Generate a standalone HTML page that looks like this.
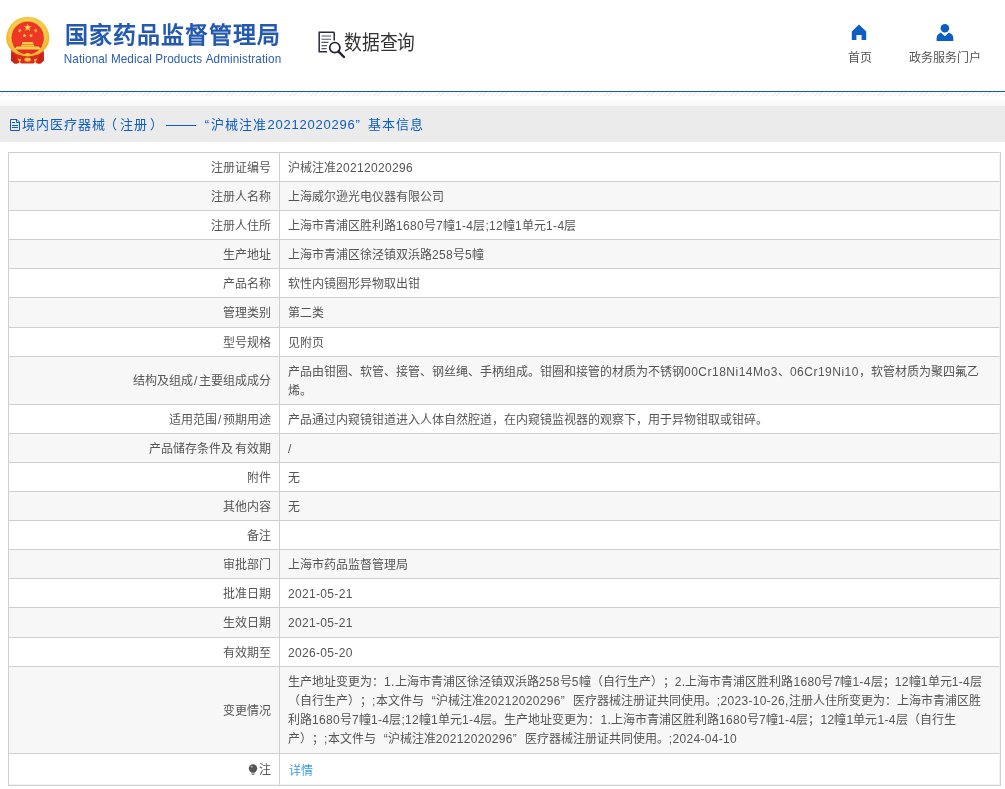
<!DOCTYPE html>
<html lang="zh-CN">
<head>
<meta charset="utf-8">
<title>境内医疗器械（注册）</title>
<style>
*{box-sizing:border-box;margin:0;padding:0}
html,body{width:1005px;height:789px;overflow:hidden;background:#fff}
body{font-family:"Liberation Sans",sans-serif;font-size:12px;color:#555;position:relative;text-spacing-trim:space-all;font-kerning:none}
.abs{position:absolute}
#hdr{position:absolute;left:0;top:0;width:1005px;height:91px;will-change:transform}
#emblem{position:absolute;left:0;top:0}
#cn{position:absolute;left:64.6px;top:19.3px;font-size:23px;line-height:32px;font-weight:bold;color:#2359ae;white-space:nowrap;letter-spacing:1px}
#en{position:absolute;left:63.8px;top:51.6px;font-size:11.7px;letter-spacing:.11px;line-height:14px;color:#2a5db0;white-space:nowrap;transform:scaleY(1.09);transform-origin:0 50%}
#sico{position:absolute;left:316.7px;top:30px}
#stxt{position:absolute;left:344.3px;top:28.6px;font-size:20px;line-height:28px;color:#333;white-space:nowrap;transform:scaleX(.888);transform-origin:0 0}
.nav{position:absolute;font-size:12px;line-height:16px;color:#555;white-space:nowrap;text-align:center}
#blue{position:absolute;left:0;top:91px;width:1005px;height:1px;background:#0c5cb6}
#hatch{position:absolute;left:0;top:92px;width:1005px;height:4px;background:repeating-linear-gradient(135deg,#fff 0,#fff 2.05px,#ececec 2.05px,#ececec 2.97px)}
#grad{position:absolute;left:0;top:96px;width:1005px;height:10px;background:linear-gradient(#fff,#fefefe 40%,#f6f6f6)}
#bar{position:absolute;left:0;top:106px;width:1005px;height:36px;background:#ebebeb;will-change:transform}
#bar .t{position:absolute;top:8.5px;font-size:13px;letter-spacing:1px;line-height:20px;color:#0b5cc3;white-space:nowrap}
#docico{position:absolute;left:10px;top:13px}
table{will-change:transform;position:absolute;left:8px;top:152px;width:993px;border-collapse:separate;border-spacing:0;table-layout:fixed;border:1px solid #cfcfcf;border-top:0}
td{border-top:1px solid #cfcfcf;font-size:12px;line-height:19px;color:#555;vertical-align:middle;white-space:nowrap;overflow:hidden}
td.l{width:271px;text-align:right;padding:2px 8.4px 0 0;border-right:1px solid #cfcfcf}
td.v{padding:2px 0 0 8px;border-right:1px solid #f3f3fb}
tr.g td{background:#f7f7f7}
tr:last-child td{border-bottom:1px solid #f3f3fb}
td i{font-style:normal;letter-spacing:.33px}
td i.a{letter-spacing:.5px}
td u{text-decoration:none;display:inline-block;width:6px;text-align:center}
td b{font-weight:normal;display:inline-block;width:12px}
td b.ql{text-align:right}
td b.qr{text-align:left}
a{color:#3a97f3;text-decoration:none}
</style>
</head>
<body>
<div id="hdr">
  <svg id="emblem" width="60" height="80" viewBox="0 0 60 80">
    <defs>
      <radialGradient id="gg" cx="50%" cy="45%" r="55%"><stop offset="0" stop-color="#ffe27a"/><stop offset=".72" stop-color="#f8cb45"/><stop offset="1" stop-color="#efb02c"/></radialGradient>
    </defs>
    <path d="M11.3 46 H43.6 L43.9 60.5 L40.5 63.6 L36.8 63.6 L35.2 62 L33.5 63.6 L21.3 63.6 L19.8 62 L18.3 63.6 L14.6 63.6 L11 60.5 Z" fill="#de2a1d"/>
    <path d="M11.3 52 L11 60.5 L14.6 63.6 L17 63.6 L16 56 Z M43.6 52 L43.9 60.5 L40.5 63.6 L38 63.6 L39 56 Z" fill="#cc2119"/>
    <path d="M6.2 38.3 A21.6 21.6 0 0 1 49.4 38.3 A21.6 18.2 0 0 1 6.2 38.3 Z" fill="url(#gg)"/>
    <circle cx="27.7" cy="37.8" r="16.2" fill="#ee3626"/>
    <path d="M13.2 45.2 A16.2 16.2 0 0 0 42.2 45.2 Z" fill="#e82c20"/>
    <path d="M24.3 54.8 Q27.7 50.5 31.1 54.8 Q27.7 57.5 24.3 54.8Z" fill="#f6c63e"/>
    <path d="M24 59.6 L25.6 57.7 H29.6 L31.2 59.6 L29.6 61.5 H25.6 Z" fill="#f5c338"/>
    <path d="M17.6 58.6 L21.4 59.6 L19.8 62.4 Z M37.4 58.6 L33.6 59.6 L35.2 62.4 Z" fill="#f5c338"/>
    <polygon points="27.7,23.4 28.7,26.2 31.7,26.3 29.3,28.1 30.2,31 27.7,29.3 25.2,31 26.1,28.1 23.7,26.3 26.7,26.2" fill="#f9d04a"/>
    <polygon points="20.9,28.8 20.6,30.2 21.9,31.0 20.4,31.3 20.0,32.7 19.4,31.4 17.9,31.5 18.9,30.4 18.4,29.0 19.7,29.7" fill="#fad648"/><polygon points="34.7,28.8 35.8,29.7 37.1,29.0 36.6,30.4 37.6,31.5 36.1,31.4 35.5,32.7 35.1,31.3 33.6,31.0 34.9,30.2" fill="#fad648"/><polygon points="25.0,33.5 25.2,35.0 26.7,35.3 25.4,36.0 25.5,37.5 24.4,36.5 23.1,37.1 23.7,35.7 22.7,34.6 24.2,34.8" fill="#fad648"/><polygon points="30.6,33.5 31.4,34.8 32.9,34.6 31.9,35.7 32.5,37.1 31.2,36.5 30.1,37.5 30.2,36.0 28.9,35.3 30.4,35.0" fill="#fad648"/>
    <path d="M21.6 44.6 L22.6 42 L32.8 42 L33.8 44.6 Z M20.6 46.3 L21.6 44.9 L33.8 44.9 L34.8 46.3 Z M14.6 49.6 L16.4 46.6 L39 46.6 L40.8 49.6 Z" fill="#f9cf48"/>
  </svg>
  <div id="cn">国家药品监督管理局</div>
  <div id="en">National Medical Products Administration</div>
  <svg id="sico" width="40" height="40" viewBox="0 0 40 40">
    <path d="M17.2 2.2 H2.2 V21.8 H10" fill="none" stroke="#2b2b3d" stroke-width="1.5"/>
    <path d="M17.2 2.2 V10.5" fill="none" stroke="#2b2b3d" stroke-width="1.5"/>
    <path d="M4.5 6 H14 M4.5 9.2 H14 M4.5 12.4 H11.5 M4.5 15.6 H10 M4.5 18.6 H9.5" stroke="#55556a" stroke-width="1.1" fill="none"/>
    <circle cx="17.8" cy="17.6" r="5.1" fill="#fff" stroke="#20202e" stroke-width="1.7"/>
    <path d="M21.6 21.6 L27 27" stroke="#20202e" stroke-width="2.4" stroke-linecap="round"/>
  </svg>
  <div id="stxt">数据查询</div>
  <svg class="abs" style="left:850px;top:23px" width="18" height="18" viewBox="0 0 18 18"><path d="M9 1.6 L1.8 8.4 V17 H6.4 V12 H11.6 V17 H16.2 V8.4 Z" fill="#0b5fc4"/></svg>
  <svg class="abs" style="left:935px;top:22px" width="20" height="20" viewBox="0 0 20 20"><circle cx="9.9" cy="6.2" r="4.3" fill="#0b5fc4"/><path d="M5.8 10.4 L9.9 14.3 L14 10.4 L16.6 12.3 Q18.3 13.6 18.3 16 V19 H1.6 V16 Q1.6 13.6 3.3 12.3 Z" fill="#0b5fc4"/></svg>
  <div class="nav" style="left:836px;top:50.2px;width:48px">首页</div>
  <div class="nav" style="left:895px;top:50.2px;width:100px">政务服务门户</div>
</div>
<div id="blue"></div>
<div id="hatch"></div>
<div id="grad"></div>
<div id="bar">
  <svg id="docico" width="10" height="12" viewBox="0 0 10 12"><path d="M.5 .5 H7 L9.5 3 V11.5 H.5 Z" fill="none" stroke="#0b5cc3" stroke-width="1"/><path d="M6.5 .5 V3.5 H9.5" fill="none" stroke="#0b5cc3" stroke-width="1"/><path d="M2 3.5 H5 M2 6.5 H8 M2 8.5 H8" stroke="#0b5cc3" stroke-width="1"/></svg>
  <span class="t" style="left:22px">境内医疗器械<span style="position:relative;left:-2px">（</span>注册<span style="position:relative;left:2px">）</span></span>
  <span class="abs" style="left:166.4px;top:18.6px;width:29.6px;height:1.2px;background:#0b5cc3"></span>
  <span class="t" style="left:204.8px">“</span>
  <span class="t" style="left:211.2px">沪械注准</span>
  <span class="t" style="left:267.5px;letter-spacing:.77px">20212020296</span>
  <span class="t" style="left:355.5px">”</span>
  <span class="t" style="left:368px">基本信息</span>
</div>
<table>
<tr style="height:29px"><td class="l">注册证编号</td><td class="v">沪械注准<i>20212020296</i></td></tr>
<tr class="g" style="height:29px"><td class="l">注册人名称</td><td class="v">上海威尔逊光电仪器有限公司</td></tr>
<tr style="height:29px"><td class="l">注册人住所</td><td class="v">上海市青浦区胜利路<i>1680</i>号<i>7</i>幢<i>1-4</i>层<i>;12</i>幢<i>1</i>单元<i>1-4</i>层</td></tr>
<tr class="g" style="height:29px"><td class="l">生产地址</td><td class="v">上海市青浦区徐泾镇双浜路<i>258</i>号<i>5</i>幢</td></tr>
<tr style="height:29px"><td class="l">产品名称</td><td class="v">软性内镜圈形异物取出钳</td></tr>
<tr class="g" style="height:30px"><td class="l">管理类别</td><td class="v">第二类</td></tr>
<tr style="height:29px"><td class="l">型号规格</td><td class="v">见附页</td></tr>
<tr class="g" style="height:48px"><td class="l">结构及组成<u>/</u>主要组成成分</td><td class="v">产品由钳圈、软管、接管、钢丝绳、手柄组成。钳圈和接管的材质为不锈钢<i class="a">00Cr18Ni14Mo3</i>、<i class="a">06Cr19Ni10</i>，软管材质为聚四氟乙<br>烯。</td></tr>
<tr style="height:29px"><td class="l">适用范围<u>/</u>预期用途</td><td class="v">产品通过内窥镜钳道进入人体自然腔道，在内窥镜监视器的观察下，用于异物钳取或钳碎。</td></tr>
<tr class="g" style="height:29px"><td class="l">产品储存条件及<u style="width:2px"></u>有效期</td><td class="v"><i>/</i></td></tr>
<tr style="height:29px"><td class="l">附件</td><td class="v">无</td></tr>
<tr class="g" style="height:29px"><td class="l">其他内容</td><td class="v">无</td></tr>
<tr style="height:29px"><td class="l">备注</td><td class="v"></td></tr>
<tr class="g" style="height:29px"><td class="l">审批部门</td><td class="v">上海市药品监督管理局</td></tr>
<tr style="height:29px"><td class="l">批准日期</td><td class="v"><i>2021-05-21</i></td></tr>
<tr class="g" style="height:30px"><td class="l">生效日期</td><td class="v"><i>2021-05-21</i></td></tr>
<tr style="height:29px"><td class="l">有效期至</td><td class="v"><i>2026-05-20</i></td></tr>
<tr class="g" style="height:87px"><td class="l">变更情况</td><td class="v">生产地址变更为：<i>1.</i>上海市青浦区徐泾镇双浜路<i>258</i>号<i>5</i>幢（自行生产）；<i>2.</i>上海市青浦区胜利路<i>1680</i>号<i>7</i>幢<i>1-4</i>层；<i>12</i>幢<i>1</i>单元<i>1-4</i>层<br>（自行生产）；<i>;</i>本文件与<b class="ql">“</b>沪械注准<i>20212020296</i><b class="qr">”</b>医疗器械注册证共同使用。<i>;2023-10-26,</i>注册人住所变更为：上海市青浦区胜<br>利路<i>1680</i>号<i>7</i>幢<i>1-4</i>层<i>;12</i>幢<i>1</i>单元<i>1-4</i>层。生产地址变更为：<i>1.</i>上海市青浦区胜利路<i>1680</i>号<i>7</i>幢<i>1-4</i>层；<i>12</i>幢<i>1</i>单元<i>1-4</i>层（自行生<br>产）；<i>;</i>本文件与<b class="ql">“</b>沪械注准<i>20212020296</i><b class="qr">”</b>医疗器械注册证共同使用。<i>;2024-04-10</i></td></tr>
<tr style="height:32px"><td class="l"><svg width="10" height="12" viewBox="0 0 10 12" style="vertical-align:-2px;margin-right:1px"><circle cx="5" cy="4.5" r="4.2" fill="#555"/><circle cx="3.6" cy="2.8" r="1" fill="#aaa"/><path d="M3.2 8.8 H6.8 V9.6 H3.2Z M3.6 10.3 H6.4 V11 H3.6Z" fill="#666"/></svg>注</td><td class="v"><a style="position:relative;top:1.2px;left:.5px">详情</a></td></tr>
</table>
</body>
</html>
